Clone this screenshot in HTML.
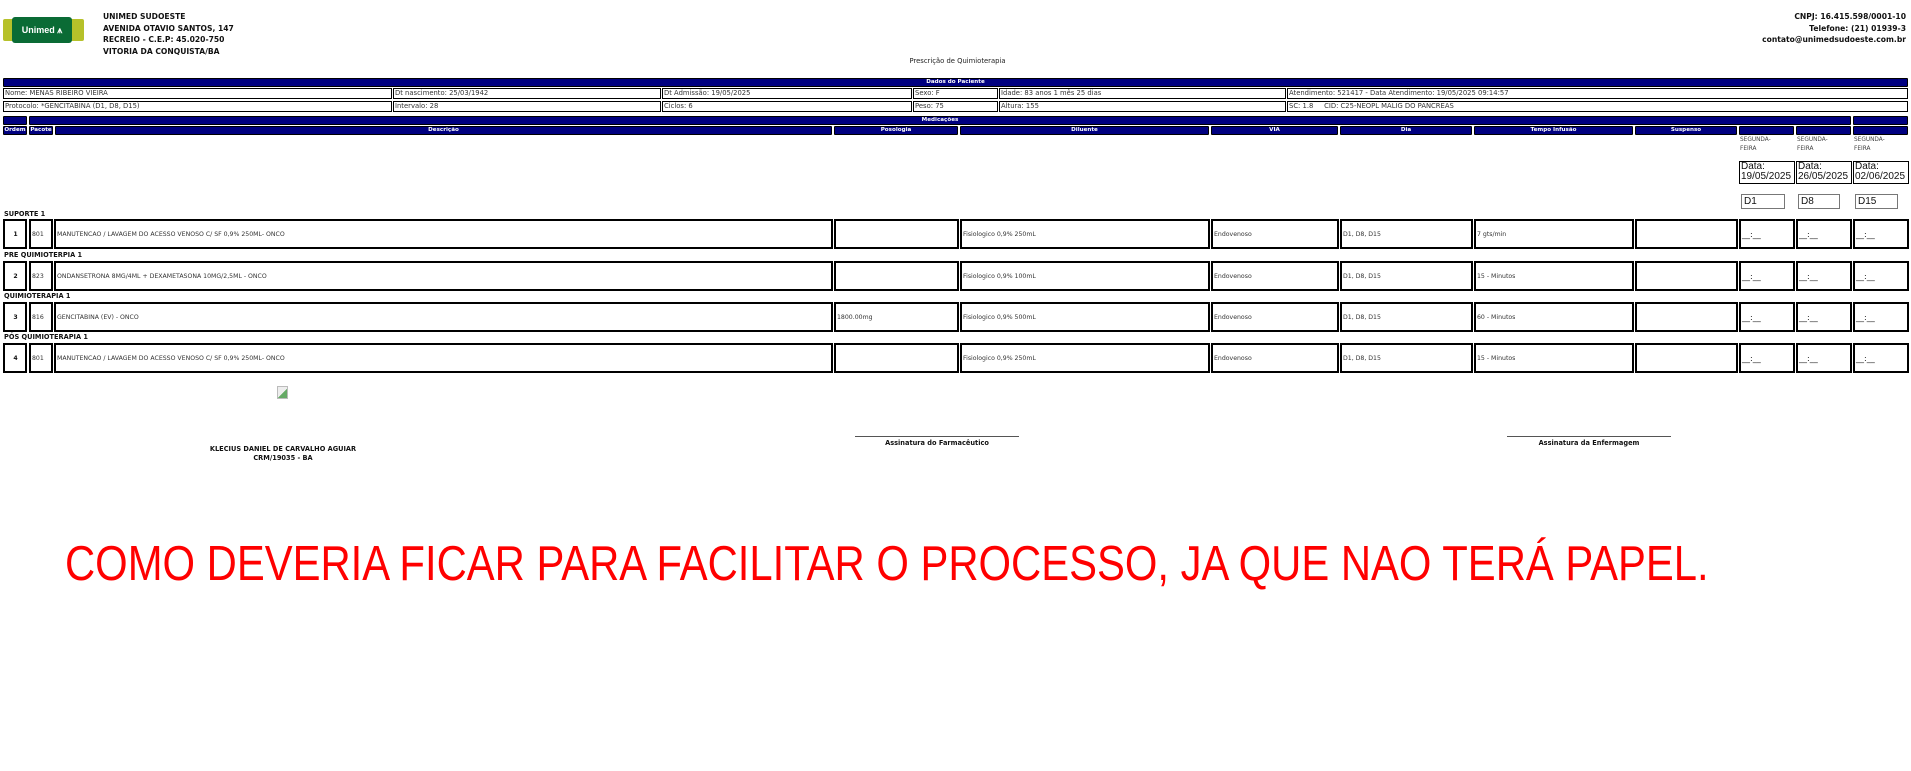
<!DOCTYPE html>
<html><head><meta charset="utf-8"><style>
*{margin:0;padding:0;box-sizing:border-box}
body{width:1911px;height:771px;background:#fff;position:relative;overflow:hidden;font-family:"DejaVu Sans","Liberation Sans",sans-serif;color:#222}
.a{position:absolute}
.hd{font-weight:bold;font-size:7.6px;color:#111;line-height:11.5px}
.nav{position:absolute;background:#000080;border:1px solid #000;border-radius:1px;color:#fff;font-weight:bold;font-size:5.6px;text-align:center;line-height:7px}
.pc{position:absolute;border:1px solid #000;font-size:6.8px;line-height:9px;padding-left:1px;white-space:nowrap;overflow:hidden;color:#333}
.c{position:absolute;border:2px solid #000;font-size:6.2px;color:#333;display:flex;align-items:center;padding-left:1px;white-space:nowrap;overflow:hidden}
.t{font-size:8px;color:#111}
.cat{position:absolute;left:4px;font-weight:bold;font-size:6.6px;color:#111}
.sg{position:absolute;font-size:5.8px;color:#444;line-height:8.5px}
.dt{position:absolute;border:1.5px solid #000;font-family:"Liberation Sans",sans-serif;font-size:10px;line-height:10px;color:#111;padding-left:1px;white-space:nowrap;overflow:hidden}
.dd{position:absolute;border:1px solid #777;font-family:"Liberation Sans",sans-serif;font-size:10px;color:#111;padding-left:2px;line-height:13px}
</style></head><body>
<div class="a" style="left:3px;top:19px;width:81px;height:22px;background:#b6c12a;border-radius:2px"></div>
<div class="a" style="left:12px;top:17px;width:60px;height:26px;background:#0a6b35;border-radius:3px;color:#fff;font-family:'Liberation Sans',sans-serif;font-weight:bold;font-size:9px;line-height:26px;text-align:center">Unimed ⩚</div>
<div class="a hd" style="left:103px;top:11px">UNIMED SUDOESTE<br>AVENIDA OTAVIO SANTOS, 147<br>RECREIO - C.E.P: 45.020-750<br>VITORIA DA CONQUISTA/BA</div>
<div class="a hd" style="right:5px;top:11px;text-align:right">CNPJ: 16.415.598/0001-10<br>Telefone: (21) 01939-3<br>contato@unimedsudoeste.com.br</div>
<div class="a" style="left:0;width:1911px;top:57px;text-align:center;font-size:6.8px;color:#222;padding-left:4px">Prescrição de Quimioterapia</div>

<div class="nav" style="left:3px;top:78px;width:1905px;height:9px">Dados do Paciente</div>
<div class="pc" style="left:3px;top:88px;width:389px;height:11px">Nome: MENAS RIBEIRO VIEIRA</div>
<div class="pc" style="left:393px;top:88px;width:268px;height:11px">Dt nascimento: 25/03/1942</div>
<div class="pc" style="left:662px;top:88px;width:250px;height:11px">Dt Admissão: 19/05/2025</div>
<div class="pc" style="left:913px;top:88px;width:85px;height:11px">Sexo: F</div>
<div class="pc" style="left:999px;top:88px;width:287px;height:11px">Idade: 83 anos 1 mês 25 dias</div>
<div class="pc" style="left:1287px;top:88px;width:621px;height:11px">Atendimento: 521417 - Data Atendimento: 19/05/2025 09:14:57</div>
<div class="pc" style="left:3px;top:101px;width:389px;height:11px">Protocolo: *GENCITABINA (D1, D8, D15)</div>
<div class="pc" style="left:393px;top:101px;width:268px;height:11px">Intervalo: 28</div>
<div class="pc" style="left:662px;top:101px;width:250px;height:11px">Ciclos: 6</div>
<div class="pc" style="left:913px;top:101px;width:85px;height:11px">Peso: 75</div>
<div class="pc" style="left:999px;top:101px;width:287px;height:11px">Altura: 155</div>
<div class="pc" style="left:1287px;top:101px;width:621px;height:11px">SC: 1.8 &nbsp;&nbsp;&nbsp; CID: C25-NEOPL MALIG DO PANCREAS</div>

<div class="nav" style="left:3px;top:116px;width:24px;height:9px"></div>
<div class="nav" style="left:29px;top:116px;width:1822px;height:9px">Medicações</div>
<div class="nav" style="left:1853px;top:116px;width:55px;height:9px"></div>

<div class="nav" style="left:3px;top:126px;width:24px;height:9px">Ordem</div>
<div class="nav" style="left:29px;top:126px;width:24px;height:9px">Pacote</div>
<div class="nav" style="left:55px;top:126px;width:777px;height:9px">Descrição</div>
<div class="nav" style="left:834px;top:126px;width:124px;height:9px">Posologia</div>
<div class="nav" style="left:960px;top:126px;width:249px;height:9px">Diluente</div>
<div class="nav" style="left:1211px;top:126px;width:127px;height:9px">VIA</div>
<div class="nav" style="left:1340px;top:126px;width:132px;height:9px">Dia</div>
<div class="nav" style="left:1474px;top:126px;width:159px;height:9px">Tempo Infusão</div>
<div class="nav" style="left:1635px;top:126px;width:102px;height:9px">Suspenso</div>
<div class="nav" style="left:1739px;top:126px;width:55px;height:9px"></div>
<div class="nav" style="left:1796px;top:126px;width:55px;height:9px"></div>
<div class="nav" style="left:1853px;top:126px;width:55px;height:9px"></div>

<div class="sg" style="left:1740px;top:136px">SEGUNDA-<br>FEIRA</div>
<div class="sg" style="left:1797px;top:136px">SEGUNDA-<br>FEIRA</div>
<div class="sg" style="left:1854px;top:136px">SEGUNDA-<br>FEIRA</div>
<div class="dt" style="left:1739px;top:161px;width:56px;height:23px">Data:<br>19/05/2025</div>
<div class="dt" style="left:1796px;top:161px;width:56px;height:23px">Data:<br>26/05/2025</div>
<div class="dt" style="left:1853px;top:161px;width:56px;height:23px">Data:<br>02/06/2025</div>
<div class="dd" style="left:1741px;top:194px;width:44px;height:15px">D1</div>
<div class="dd" style="left:1798px;top:194px;width:42px;height:15px">D8</div>
<div class="dd" style="left:1855px;top:194px;width:43px;height:15px">D15</div>

<div class="a" style="left:277px;top:386px;width:11px;height:13px;border:1px solid #bbb;background:linear-gradient(135deg,#eee 55%,#6a6 55%)"></div>
<div class="a" style="left:183px;top:445px;width:200px;text-align:center;font-weight:bold;font-size:6.6px;line-height:8.5px;color:#111">KLECIUS DANIEL DE CARVALHO AGUIAR<br>CRM/19035 - BA</div>
<div class="a" style="left:855px;top:436px;width:164px;border-top:1px solid #555"></div>
<div class="a" style="left:837px;top:439px;width:200px;text-align:center;font-weight:bold;font-size:6.6px;color:#111">Assinatura do Farmacêutico</div>
<div class="a" style="left:1507px;top:436px;width:164px;border-top:1px solid #555"></div>
<div class="a" style="left:1489px;top:439px;width:200px;text-align:center;font-weight:bold;font-size:6.6px;color:#111">Assinatura da Enfermagem</div>

<div class="a" style="left:65px;top:536px;white-space:nowrap;font-family:'Liberation Sans',sans-serif;font-size:49px;line-height:56px;color:#ff0000;transform:scaleX(0.853);transform-origin:left top">COMO DEVERIA FICAR PARA FACILITAR O PROCESSO, JA QUE NAO TERÁ PAPEL.</div>

<div class="cat" style="top:210px">SUPORTE 1</div>
<div class="cat" style="top:251px">PRE QUIMIOTERPIA 1</div>
<div class="cat" style="top:292px">QUIMIOTERAPIA 1</div>
<div class="cat" style="top:333px">PÓS QUIMIOTERAPIA 1</div>

<div style="position:absolute;left:0;top:219px">
<div class="c" style="left:3px;top:0;width:24px;height:30px;justify-content:center;font-weight:bold;color:#111">1</div>
<div class="c" style="left:29px;top:0;width:24px;height:30px">801</div>
<div class="c" style="left:54px;top:0;width:779px;height:30px">MANUTENCAO / LAVAGEM DO ACESSO VENOSO C/ SF 0,9% 250ML- ONCO</div>
<div class="c" style="left:834px;top:0;width:125px;height:30px"></div>
<div class="c" style="left:960px;top:0;width:250px;height:30px">Fisiologico 0,9% 250mL</div>
<div class="c" style="left:1211px;top:0;width:128px;height:30px">Endovenoso</div>
<div class="c" style="left:1340px;top:0;width:133px;height:30px">D1, D8, D15</div>
<div class="c" style="left:1474px;top:0;width:160px;height:30px">7 gts/min</div>
<div class="c" style="left:1635px;top:0;width:103px;height:30px"></div>
<div class="c t" style="left:1739px;top:0;width:56px;height:30px">__:__</div>
<div class="c t" style="left:1796px;top:0;width:56px;height:30px">__:__</div>
<div class="c t" style="left:1853px;top:0;width:56px;height:30px">__:__</div>
</div>
<div style="position:absolute;left:0;top:261px">
<div class="c" style="left:3px;top:0;width:24px;height:30px;justify-content:center;font-weight:bold;color:#111">2</div>
<div class="c" style="left:29px;top:0;width:24px;height:30px">823</div>
<div class="c" style="left:54px;top:0;width:779px;height:30px">ONDANSETRONA 8MG/4ML + DEXAMETASONA 10MG/2,5ML - ONCO</div>
<div class="c" style="left:834px;top:0;width:125px;height:30px"></div>
<div class="c" style="left:960px;top:0;width:250px;height:30px">Fisiologico 0,9% 100mL</div>
<div class="c" style="left:1211px;top:0;width:128px;height:30px">Endovenoso</div>
<div class="c" style="left:1340px;top:0;width:133px;height:30px">D1, D8, D15</div>
<div class="c" style="left:1474px;top:0;width:160px;height:30px">15 - Minutos</div>
<div class="c" style="left:1635px;top:0;width:103px;height:30px"></div>
<div class="c t" style="left:1739px;top:0;width:56px;height:30px">__:__</div>
<div class="c t" style="left:1796px;top:0;width:56px;height:30px">__:__</div>
<div class="c t" style="left:1853px;top:0;width:56px;height:30px">__:__</div>
</div>
<div style="position:absolute;left:0;top:302px">
<div class="c" style="left:3px;top:0;width:24px;height:30px;justify-content:center;font-weight:bold;color:#111">3</div>
<div class="c" style="left:29px;top:0;width:24px;height:30px">816</div>
<div class="c" style="left:54px;top:0;width:779px;height:30px">GENCITABINA (EV) - ONCO</div>
<div class="c" style="left:834px;top:0;width:125px;height:30px">1800.00mg</div>
<div class="c" style="left:960px;top:0;width:250px;height:30px">Fisiologico 0,9% 500mL</div>
<div class="c" style="left:1211px;top:0;width:128px;height:30px">Endovenoso</div>
<div class="c" style="left:1340px;top:0;width:133px;height:30px">D1, D8, D15</div>
<div class="c" style="left:1474px;top:0;width:160px;height:30px">60 - Minutos</div>
<div class="c" style="left:1635px;top:0;width:103px;height:30px"></div>
<div class="c t" style="left:1739px;top:0;width:56px;height:30px">__:__</div>
<div class="c t" style="left:1796px;top:0;width:56px;height:30px">__:__</div>
<div class="c t" style="left:1853px;top:0;width:56px;height:30px">__:__</div>
</div>
<div style="position:absolute;left:0;top:343px">
<div class="c" style="left:3px;top:0;width:24px;height:30px;justify-content:center;font-weight:bold;color:#111">4</div>
<div class="c" style="left:29px;top:0;width:24px;height:30px">801</div>
<div class="c" style="left:54px;top:0;width:779px;height:30px">MANUTENCAO / LAVAGEM DO ACESSO VENOSO C/ SF 0,9% 250ML- ONCO</div>
<div class="c" style="left:834px;top:0;width:125px;height:30px"></div>
<div class="c" style="left:960px;top:0;width:250px;height:30px">Fisiologico 0,9% 250mL</div>
<div class="c" style="left:1211px;top:0;width:128px;height:30px">Endovenoso</div>
<div class="c" style="left:1340px;top:0;width:133px;height:30px">D1, D8, D15</div>
<div class="c" style="left:1474px;top:0;width:160px;height:30px">15 - Minutos</div>
<div class="c" style="left:1635px;top:0;width:103px;height:30px"></div>
<div class="c t" style="left:1739px;top:0;width:56px;height:30px">__:__</div>
<div class="c t" style="left:1796px;top:0;width:56px;height:30px">__:__</div>
<div class="c t" style="left:1853px;top:0;width:56px;height:30px">__:__</div>
</div>
</body></html>
